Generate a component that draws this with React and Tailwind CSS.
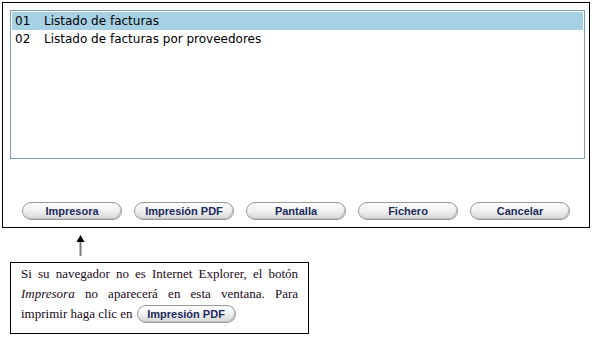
const rows = [
  { code: '01', label: 'Listado de facturas', selected: true },
  { code: '02', label: 'Listado de facturas por proveedores' },
]

const buttons = ['Impresora', 'Impresión PDF', 'Pantalla', 'Fichero', 'Cancelar']

function PillButton({ children, className = '' }) {
  return (
    <button
      className={`h-[18px] rounded-full border border-[#9a9a9a] bg-[linear-gradient(#ffffff,#f2f2f2_45%,#d6d6d6)] shadow-[inset_-1px_-1px_0_#c4c4c4] text-[11px] font-bold text-[#1b2a5c] leading-none font-['Liberation_Sans',Arial,sans-serif] ${className}`}
    >
      {children}
    </button>
  )
}

export default function App() {
  return (
    <div className="w-[598px] h-[343px] bg-white overflow-hidden">
      {/* Dialog frame */}
      <div className="ml-[2px] mt-[2px] w-[588px] h-[226px] border border-black pt-[7px] pl-[7px] flex flex-col">
        <div className="w-[575px] h-[149px] border border-[#7f9db9] p-px font-['DejaVu_Sans',Verdana,sans-serif] text-[12px] text-black">
          {rows.map((r) => (
            <div
              key={r.code}
              className={`h-[18px] flex items-center pl-[3px] ${r.selected ? 'bg-[#a6d0e4]' : ''}`}
            >
              <span className="w-[29px]">{r.code}</span>
              <span>{r.label}</span>
            </div>
          ))}
        </div>

        <div className="mt-[43px] pl-[12px] flex gap-[12px]">
          {buttons.map((b) => (
            <PillButton key={b} className="w-[100px]">
              {b}
            </PillButton>
          ))}
        </div>
      </div>

      {/* Arrow pointing to Impresora */}
      <div className="ml-[75px] mt-[7px] w-[11px] h-[22px]">
        <svg width="11" height="22" viewBox="0 0 11 22">
          <line x1="5.5" y1="6" x2="5.5" y2="21" stroke="#7a7a7a" strokeWidth="2" />
          <polygon points="5.5,0 1.5,7 9.5,7" fill="#000" />
        </svg>
      </div>

      {/* Note */}
      <div className="ml-[10px] mt-[5px] w-[299px] h-[72px] border border-black px-[10px] pt-px font-['Liberation_Serif','Times_New_Roman',serif] text-[13px] text-[#1a0a20] leading-[20px]">
        <p className="text-justify [text-align-last:justify]">
          Si su navegador no es Internet Explorer, el botón
        </p>
        <p className="text-justify [text-align-last:justify]">
          <i>Impresora</i> no aparecerá en esta ventana. Para
        </p>
        <div className="flex items-center h-[20px]">
          <span>imprimir haga clic en</span>
          <PillButton className="ml-[4px] w-[99px] h-[16px]">Impresión PDF</PillButton>
        </div>
      </div>
    </div>
  )
}
